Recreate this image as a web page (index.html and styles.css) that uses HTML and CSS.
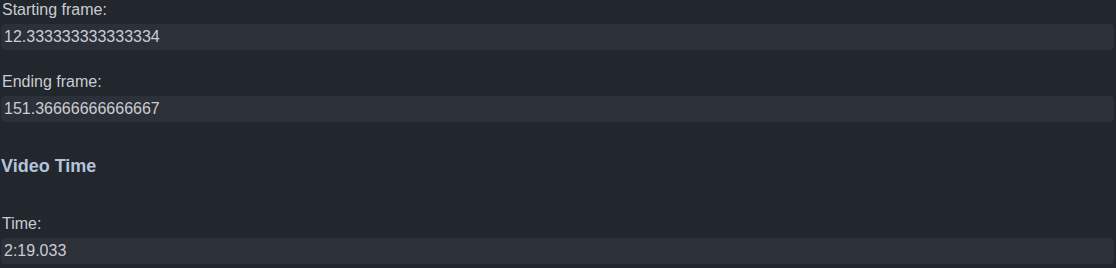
FILE: index.html
```html
<!DOCTYPE html>
<html>
<head>
<meta charset="utf-8">
<link rel="stylesheet" href="styles.css">
</head>
<body>
<div class="panel">
  <div class="field">
    <label class="label">Starting frame:</label>
    <div class="input">12.333333333333334</div>
  </div>
  <div class="field">
    <label class="label">Ending frame:</label>
    <div class="input">151.36666666666667</div>
  </div>
  <h4 class="heading">Video Time</h4>
  <div class="field last">
    <label class="label">Time:</label>
    <div class="input">2:19.033</div>
  </div>
</div>
</body>
</html>
```
FILE: styles.css
```css
html, body {
  margin: 0;
  padding: 0;
  background: #22262d;
}
body {
  font-family: "Liberation Sans", Arial, sans-serif;
  font-size: 16px;
  color: #c9cdd2;
}
.panel {
  padding: 0 2px 0 1px;
  display: flex;
  flex-direction: column;
}
.field {
  display: flex;
  flex-direction: column;
  margin-bottom: 22px;
}
.field.last {
  margin-bottom: 0;
}
.label {
  display: block;
  line-height: 19px;
  padding-left: 1px;
}
.input {
  margin-top: 5px;
  height: 26px;
  line-height: 26px;
  background: #2c3139;
  border-radius: 4px;
  padding-left: 3px;
  color: #c9cdd2;
}
.heading {
  margin: 12px 0 38px 0;
  font-size: 18px;
  font-weight: bold;
  line-height: 20px;
  color: #b3c4da;
}
```
